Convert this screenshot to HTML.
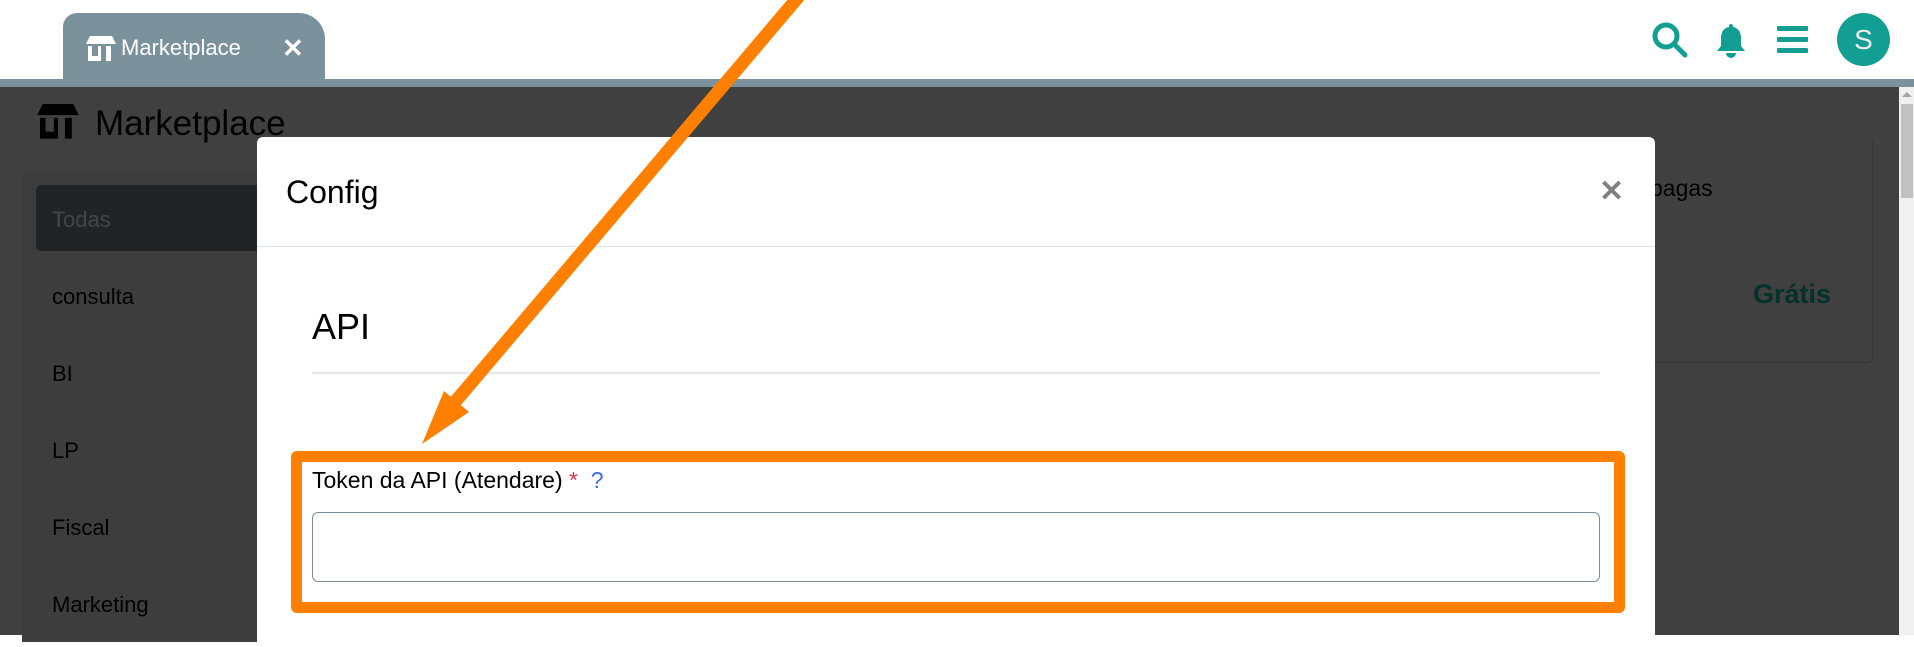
<!DOCTYPE html>
<html><head><meta charset="utf-8"><style>
*{box-sizing:border-box;margin:0;padding:0}
body{width:1914px;height:635px;overflow:hidden;position:relative;background:#fff;font-family:"Liberation Sans",sans-serif}
.abs{position:absolute}
</style></head><body>
<div class="abs" style="left:63px;top:13px;width:262px;height:70px;background:#7b929c;border-radius:14px 26px 0 0"></div>
<svg class="abs" style="left:86px;top:36px" width="30" height="26" viewBox="0 0 30 26"><path d="M4 0h22l4 8H0z" fill="#fff"/><rect x="2" y="10" width="13" height="15" fill="#fff"/><rect x="6" y="10" width="6" height="10" fill="#7b929c"/><rect x="20" y="10" width="5" height="15" fill="#fff"/></svg>
<div class="abs" style="left:121px;top:35px;color:#fff;font-size:22px">Marketplace</div>
<div class="abs" style="left:282px;top:33px;color:#fff;font-size:26px;font-weight:bold">✕</div>
<div class="abs" style="left:0;top:79px;width:1914px;height:8px;background:#7b929c"></div>
<svg class="abs" style="left:1651px;top:21px" width="40" height="38" viewBox="0 0 40 38"><circle cx="15" cy="15" r="11" fill="none" stroke="#129e93" stroke-width="5"/><path d="M23 23l11 11" stroke="#129e93" stroke-width="5" stroke-linecap="round"/></svg>
<svg class="abs" style="left:1714px;top:22px" width="34" height="36" viewBox="0 0 34 36"><path d="M17 2c2 0 2 2 2 3c6 1 8 6 8 11v8l4 5H3l4-5v-8c0-5 2-10 8-11c0-1 0-3 2-3z" fill="#129e93"/><path d="M12 31h10a5 5 0 0 1-10 0z" fill="#129e93"/></svg>
<div class="abs" style="left:1777px;top:26px;width:31px;height:5px;background:#129e93;border-radius:1px"></div>
<div class="abs" style="left:1777px;top:37px;width:31px;height:5px;background:#129e93;border-radius:1px"></div>
<div class="abs" style="left:1777px;top:48px;width:31px;height:5px;background:#129e93;border-radius:1px"></div>
<div class="abs" style="left:1837px;top:13px;width:53px;height:53px;border-radius:50%;background:#129e93;color:#eee;font-size:28px;text-align:center;line-height:53px">S</div>
<div class="abs" style="left:0;top:87px;width:1899px;height:548px;background:#404040"></div>
<div class="abs" style="left:1899px;top:87px;width:15px;height:548px;background:#f0f0f0"></div>
<div class="abs" style="left:1901px;top:104px;width:12px;height:94px;background:#c1c1c1"></div>
<div class="abs" style="left:1902px;top:92px;width:0;height:0;border:5px solid transparent;border-bottom-color:#a3a3a3;border-top:0"></div>
<svg class="abs" style="left:36px;top:104px" width="44" height="36" viewBox="0 0 30 26"><path d="M4 0h22l4 8H0z" fill="#000"/><rect x="2" y="10" width="13" height="15" fill="#000"/><rect x="6" y="10" width="6" height="10" fill="#404040"/><rect x="20" y="10" width="5" height="15" fill="#000"/></svg>
<div class="abs" style="left:95px;top:104px;color:#000;font-size:35px">Marketplace</div>
<div class="abs" style="left:22px;top:172px;width:240px;height:470px;background:#3d3d3d"></div>
<div class="abs" style="left:36px;top:185px;width:230px;height:66px;background:#212426;border-radius:5px"></div>
<div class="abs" style="left:52px;top:207px;color:#444;font-size:22px">Todas</div>
<div class="abs" style="left:52px;top:284px;color:#000;font-size:22px">consulta</div>
<div class="abs" style="left:52px;top:361px;color:#000;font-size:22px">BI</div>
<div class="abs" style="left:52px;top:438px;color:#000;font-size:22px">LP</div>
<div class="abs" style="left:52px;top:515px;color:#000;font-size:22px">Fiscal</div>
<div class="abs" style="left:52px;top:592px;color:#000;font-size:22px">Marketing</div>
<div class="abs" style="left:1500px;top:140px;width:373px;height:223px;border:1px solid #363636;border-top:0;border-radius:0 0 6px 6px"></div>
<div class="abs" style="left:1650px;top:175px;color:#000;font-size:23px">pagas</div>
<div class="abs" style="left:1753px;top:279px;color:#06302a;font-size:27px;font-weight:bold">Grátis</div>
<div class="abs" style="left:257px;top:137px;width:1398px;height:510px;background:#fff;border-radius:6px 6px 0 0"></div>
<div class="abs" style="left:257px;top:246px;width:1398px;height:1px;background:#dee2e6"></div>
<div class="abs" style="left:286px;top:174px;color:#000;font-size:32px">Config</div>
<div class="abs" style="left:1599px;top:174px;color:#808080;font-size:30px;font-weight:bold">✕</div>
<div class="abs" style="left:312px;top:306px;color:#000;font-size:36px">API</div>
<div class="abs" style="left:312px;top:372px;width:1288px;height:2px;background:#e6e6e6"></div>
<div class="abs" style="left:291px;top:451px;width:1334px;height:162px;border:11px solid #ff8000;border-radius:6px"></div>
<div class="abs" style="left:312px;top:467px;color:#000;font-size:23px">Token da API (Atendare) <span style="color:#dc3545">*</span> &nbsp;<span style="color:#3b6fd6">?</span></div>
<div class="abs" style="left:312px;top:512px;width:1288px;height:70px;border:1px solid #7d8a99;border-radius:6px"></div>
<svg class="abs" style="left:0;top:0" width="1914" height="635"><path d="M800 -5L455 402" stroke="#ff8000" stroke-width="13"/><path d="M422 444L444 391L469 412z" fill="#ff8000"/></svg>
</body></html>
